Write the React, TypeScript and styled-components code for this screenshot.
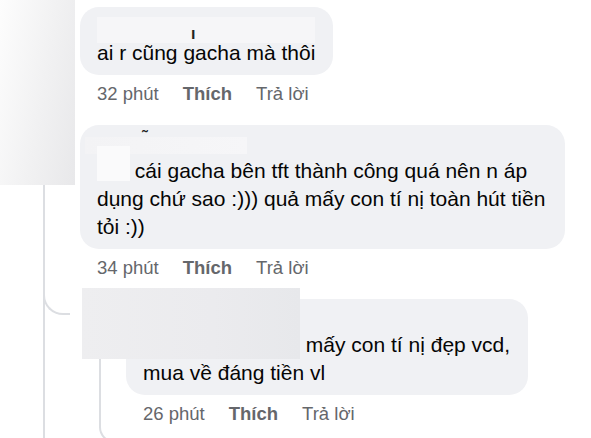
import styled, { createGlobalStyle } from 'styled-components'

const GlobalStyle = createGlobalStyle`
  body {
    margin: 0;
    background: #ffffff;
    font-family: "Liberation Sans", Arial, sans-serif;
  }
`

const Page = styled.div`
  position: relative;
  display: flex;
  flex-direction: column;
  gap: 19px;
  height: 438px;
  overflow: hidden;
  padding-top: 7px;
  box-sizing: border-box;
  background: #ffffff;
`

// blurred-out avatar / name patches that sit on top of the screenshot
const Redact = styled.div<{ $x: number; $y: number; $w: number; $h: number; $bg: string }>`
  position: absolute;
  left: ${p => p.$x}px;
  top: ${p => p.$y}px;
  width: ${p => p.$w}px;
  height: ${p => p.$h}px;
  background: ${p => p.$bg};
  z-index: 2;
`

const Speck = styled.span<{ $x: number; $y: number }>`
  position: absolute;
  left: ${p => p.$x}px;
  top: ${p => p.$y}px;
  font-size: 16px;
  font-weight: 700;
  line-height: 1;
  color: #222;
  z-index: 3;
`

const Comment = styled.div<{ $indent: number }>`
  display: flex;
  flex-direction: column;
  align-items: flex-start;
  gap: 7px;
  margin-left: ${p => p.$indent}px;
`

const Bubble = styled.div<{ $max?: number }>`
  position: relative;
  box-sizing: border-box;
  max-width: ${p => (p.$max ? `${p.$max}px` : 'none')};
  padding: 8px 18px 8px 17px;
  border-radius: 19px;
  background: #f0f1f4;
`

const Name = styled.div`
  height: 24px;
`

const Text = styled.div`
  font-size: 21px;
  line-height: 28px;
  color: #050505;
`

const Tag = styled.span<{ $w: number }>`
  display: inline-block;
  width: ${p => p.$w}px;
`

const Line = styled.span`
  white-space: nowrap;
`

const Meta = styled.div`
  display: flex;
  gap: 24px;
  padding-left: 17px;
  font-size: 18.5px;
  line-height: 24px;
  color: #65676b;
`

const Action = styled.span<{ $strong?: boolean }>`
  font-weight: ${p => (p.$strong ? 700 : 400)};
`

const Thread = styled.div`
  position: relative;
  display: flex;
  flex-direction: column;
  gap: 19px;
  padding-bottom: 40px;

  &::before {
    content: '';
    position: absolute;
    left: 43px;
    top: 40px;
    bottom: 0;
    width: 2px;
    background: #dcdee2;
  }
`

const Replies = styled.div`
  position: relative;

  &::before {
    content: '';
    position: absolute;
    left: 43px;
    top: -26px;
    width: 25px;
    height: 40px;
    border-left: 2px solid #dcdee2;
    border-bottom: 2px solid #dcdee2;
    border-bottom-left-radius: 20px;
  }

  &::after {
    content: '';
    position: absolute;
    left: 99px;
    top: 56px;
    width: 24px;
    height: 86px;
    border-left: 2px solid #dcdee2;
    border-bottom: 2px solid #dcdee2;
    border-bottom-left-radius: 16px;
  }
`

function MetaRow({ time }: { time: string }) {
  return (
    <Meta>
      <span>{time}</span>
      <Action $strong>Thích</Action>
      <Action>Trả lời</Action>
    </Meta>
  )
}

export default function App() {
  return (
    <>
      <GlobalStyle />
      <Page>
        <Redact $x={0} $y={0} $w={75} $h={185} $bg="linear-gradient(100deg, #fdfdfd 0%, #f1f1f2 55%, #e8e8ea 100%)" />

        <Comment $indent={80}>
          <Bubble>
            <Redact $x={17} $y={10} $w={218} $h={26} $bg="#f6f6f8" />
            <Speck $x={111} $y={19}>ı</Speck>
            <Name />
            <Text>ai r cũng gacha mà thôi</Text>
          </Bubble>
          <MetaRow time="32 phút" />
        </Comment>

        <Thread>
          <Comment $indent={80}>
            <Bubble $max={485}>
              <Redact $x={5} $y={12} $w={162} $h={17} $bg="linear-gradient(90deg, #f3f3f5, #f6f6f8)" />
              <Redact $x={17} $y={21} $w={33} $h={35} $bg="#fafafb" />
              <Speck $x={62} $y={4}>˜</Speck>
              <Name />
              <Text>
                <Tag $w={32} /> cái gacha bên tft thành công quá nên n áp dụng chứ sao :))) quả mấy con tí nị toàn hút tiền tỏi :))
              </Text>
            </Bubble>
            <MetaRow time="34 phút" />
          </Comment>

          <Replies>
            <Redact $x={82} $y={-11} $w={218} $h={71} $bg="linear-gradient(90deg, #eeeef0 0%, #ebebee 60%, #e7e8eb 100%)" />
            <Comment $indent={126}>
              <Bubble $max={402}>
                <Name />
                <Text>
                  <Line>
                    <Tag $w={157} /> mấy con tí nị đẹp vcd,
                  </Line>
                  <br />
                  mua về đáng tiền vl
                </Text>
              </Bubble>
              <MetaRow time="26 phút" />
            </Comment>
          </Replies>
        </Thread>
      </Page>
    </>
  )
}
